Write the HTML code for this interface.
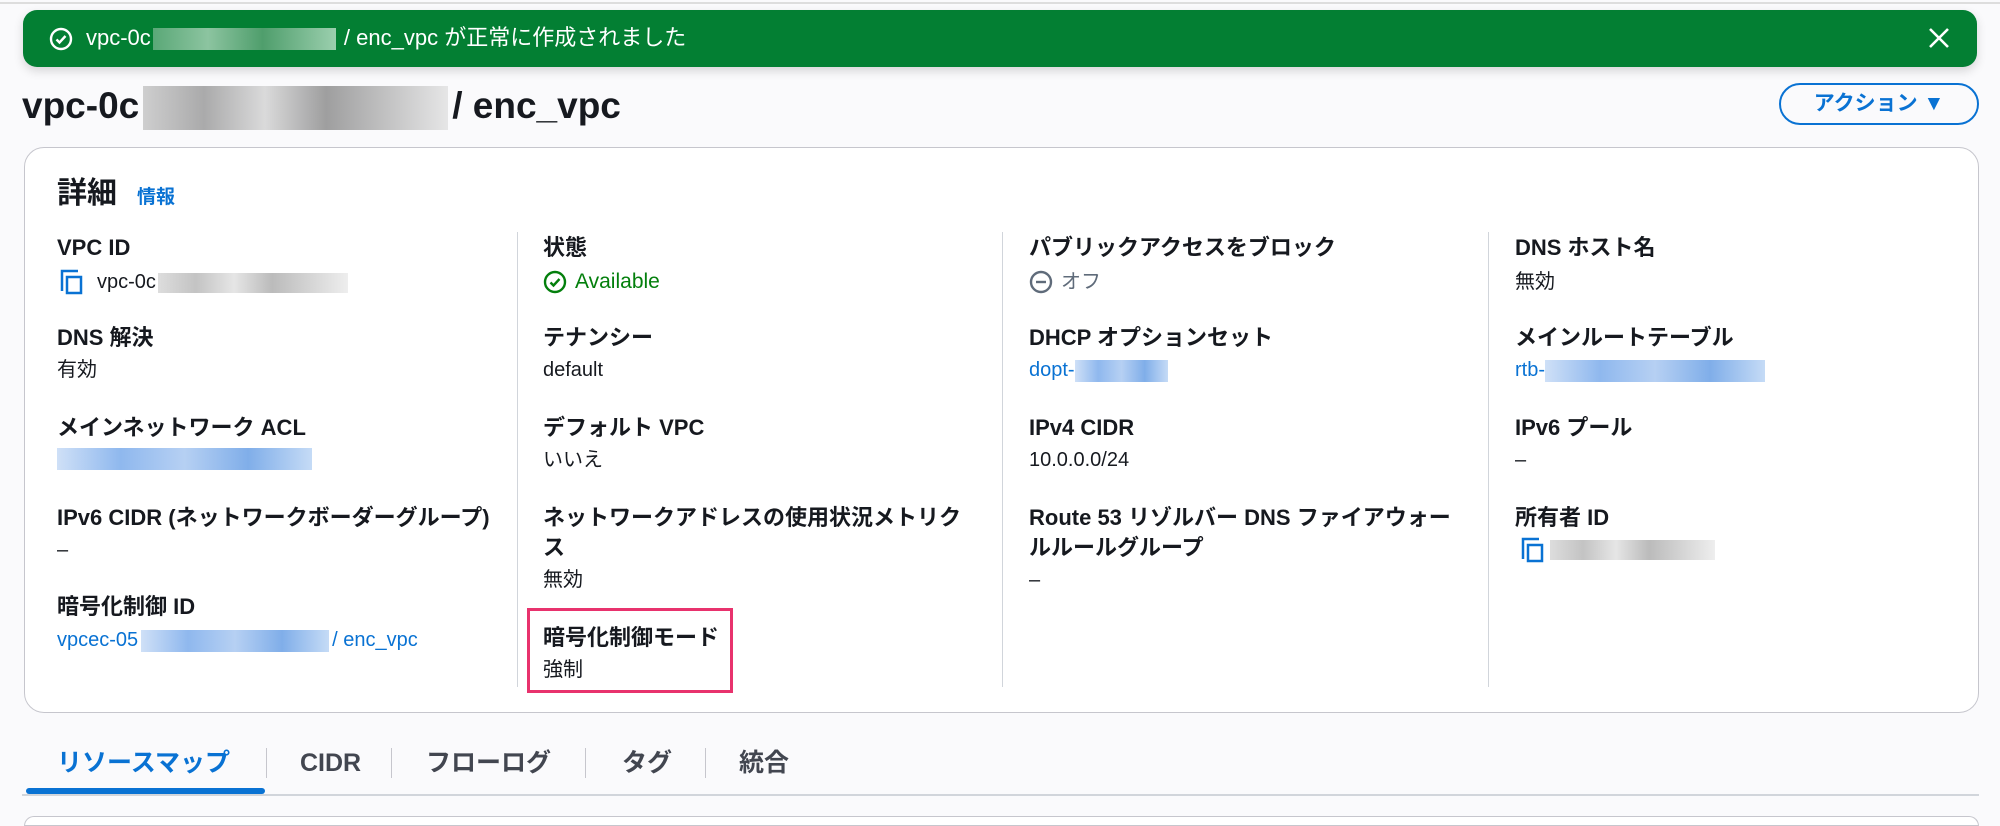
<!DOCTYPE html>
<html><head><meta charset="utf-8"><style>
*{margin:0;padding:0;box-sizing:border-box}
body{width:2000px;height:818px;background:#fafafc;font-family:"Liberation Sans","Noto Sans CJK JP",sans-serif;color:#16191f;position:relative;overflow:hidden}
.a{position:absolute;white-space:nowrap}
.l{font-size:22px;font-weight:bold;line-height:30px}
.v{font-size:20px;line-height:30px}
.lk{color:#0972d3}
.bg{background:linear-gradient(90deg,#bbb,#888 20%,#ccc 40%,#777 60%,#aaa 80%,#ddd);opacity:.7}
.bb{background:linear-gradient(90deg,#cfe0f7,#8fb8ee 25%,#b6d0f3 50%,#80aee9 75%,#c5dbf6);}
.dv{position:absolute;top:232px;height:455px;width:1px;background:#d1d5db}
.tb{position:absolute;top:748px;font-size:25px;font-weight:bold;line-height:30px;color:#424650}
</style></head><body>
<div class="a" style="left:0;top:2px;width:2000px;height:2px;background:#ddd"></div>
<div class="a" style="left:23px;top:10px;width:1954px;height:57px;background:#037f33;border-radius:14px;box-shadow:0 4px 10px rgba(0,0,0,.15)"></div>
<svg class="a" style="left:49px;top:27px" width="24" height="24" viewBox="0 0 24 24"><circle cx="12" cy="12" r="10" fill="none" stroke="#fff" stroke-width="2.4"/><path d="M7.5 12.5l3 3 6-6.5" fill="none" stroke="#fff" stroke-width="2.4"/></svg>
<div class="a" style="left:86px;top:23px;font-size:22px;line-height:30px;color:#fff">vpc-0c<span style="display:inline-block;width:183px;height:22px;vertical-align:middle;background:linear-gradient(90deg,#5aa877,#8cc4a0 30%,#4f9e6c 60%,#9bcfae);margin:0 2px"></span> / enc_vpc が正常に作成されました</div>
<svg class="a" style="left:1928px;top:27px" width="22" height="22" viewBox="0 0 22 22"><path d="M2 2L20 20M20 2L2 20" stroke="#fff" stroke-width="2.6"/></svg>

<div class="a" style="left:22px;top:82px;font-size:37px;font-weight:bold;line-height:48px">vpc-0c<span class="bg" style="display:inline-block;width:305px;height:44px;vertical-align:middle;margin:0 4px"></span>/ enc_vpc</div>
<div class="a" style="left:1779px;top:83px;width:200px;height:42px;border:2.5px solid #0972d3;border-radius:21px;color:#0972d3;font-size:21px;font-weight:bold;line-height:37px;text-align:center">アクション ▼</div>

<div class="a" style="left:24px;top:147px;width:1955px;height:566px;background:#fff;border:1.5px solid #c6c6cd;border-radius:20px"></div>
<div class="a" style="left:57px;top:176px;font-size:30px;font-weight:bold;line-height:36px">詳細<span style="font-size:19px;color:#0972d3;font-weight:bold;margin-left:20px">情報</span></div>
<div class="dv" style="left:517px"></div><div class="dv" style="left:1002px"></div><div class="dv" style="left:1488px"></div>

<div class="a l" style="left:57px;top:233px">VPC ID</div>
<svg class="a" style="left:60px;top:269px" width="24" height="26" viewBox="0 0 24 26"><path d="M2 22V2h16" fill="none" stroke="#0972d3" stroke-width="2.5"/><rect x="7" y="8" width="14" height="16" fill="none" stroke="#0972d3" stroke-width="2.5"/></svg>
<div class="a v" style="left:97px;top:267px">vpc-0c<span class="bg" style="display:inline-block;width:190px;height:20px;vertical-align:middle;margin-left:2px;opacity:.5"></span></div>
<div class="a l" style="left:57px;top:323px">DNS 解決</div>
<div class="a v" style="left:57px;top:355px">有効</div>
<div class="a l" style="left:57px;top:413px">メインネットワーク ACL</div>
<div class="a bb" style="left:57px;top:448px;width:255px;height:22px"></div>
<div class="a l" style="left:57px;top:503px">IPv6 CIDR (ネットワークボーダーグループ)</div>
<div class="a v" style="left:57px;top:535px">–</div>
<div class="a l" style="left:57px;top:592px">暗号化制御 ID</div>
<div class="a v lk" style="left:57px;top:625px">vpcec-05<span class="bb" style="display:inline-block;width:188px;height:22px;vertical-align:middle;margin:0 3px"></span>/ enc_vpc</div>

<div class="a l" style="left:543px;top:233px">状態</div>
<svg class="a" style="left:543px;top:270px" width="24" height="24" viewBox="0 0 24 24"><circle cx="12" cy="12" r="10" fill="none" stroke="#037f0c" stroke-width="2.4"/><path d="M7.5 12.5l3 3 6-6.5" fill="none" stroke="#037f0c" stroke-width="2.4"/></svg>
<div class="a v" style="left:575px;top:267px;color:#037f0c;font-size:21px">Available</div>
<div class="a l" style="left:543px;top:323px">テナンシー</div>
<div class="a v" style="left:543px;top:355px">default</div>
<div class="a l" style="left:543px;top:413px">デフォルト VPC</div>
<div class="a v" style="left:543px;top:445px">いいえ</div>
<div class="a l" style="left:543px;top:503px">ネットワークアドレスの使用状況メトリク</div>
<div class="a l" style="left:543px;top:533px">ス</div>
<div class="a v" style="left:543px;top:565px">無効</div>
<div class="a" style="left:527px;top:608px;width:206px;height:85px;border:3px solid #e8326d"></div>
<div class="a l" style="left:543px;top:623px">暗号化制御モード</div>
<div class="a v" style="left:543px;top:655px">強制</div>

<div class="a l" style="left:1029px;top:233px">パブリックアクセスをブロック</div>
<svg class="a" style="left:1029px;top:270px" width="24" height="24" viewBox="0 0 24 24"><circle cx="12" cy="12" r="10" fill="none" stroke="#5f6b7a" stroke-width="2.4"/><path d="M7 12h10" stroke="#5f6b7a" stroke-width="2.4"/></svg>
<div class="a v" style="left:1061px;top:267px;color:#5f6b7a">オフ</div>
<div class="a l" style="left:1029px;top:323px">DHCP オプションセット</div>
<div class="a v lk" style="left:1029px;top:355px">dopt-<span class="bb" style="display:inline-block;width:93px;height:22px;vertical-align:middle"></span></div>
<div class="a l" style="left:1029px;top:413px">IPv4 CIDR</div>
<div class="a v" style="left:1029px;top:445px">10.0.0.0/24</div>
<div class="a l" style="left:1029px;top:503px">Route 53 リゾルバー DNS ファイアウォー</div>
<div class="a l" style="left:1029px;top:533px">ルルールグループ</div>
<div class="a v" style="left:1029px;top:565px">–</div>

<div class="a l" style="left:1515px;top:233px">DNS ホスト名</div>
<div class="a v" style="left:1515px;top:267px">無効</div>
<div class="a l" style="left:1515px;top:323px">メインルートテーブル</div>
<div class="a v lk" style="left:1515px;top:355px">rtb-<span class="bb" style="display:inline-block;width:220px;height:22px;vertical-align:middle"></span></div>
<div class="a l" style="left:1515px;top:413px">IPv6 プール</div>
<div class="a v" style="left:1515px;top:445px">–</div>
<div class="a l" style="left:1515px;top:503px">所有者 ID</div>
<svg class="a" style="left:1521px;top:537px" width="24" height="26" viewBox="0 0 24 26"><path d="M2 22V2h16" fill="none" stroke="#0972d3" stroke-width="2.5"/><rect x="7" y="8" width="14" height="16" fill="none" stroke="#0972d3" stroke-width="2.5"/></svg>
<div class="a bg" style="left:1550px;top:540px;width:165px;height:20px;opacity:.5"></div>

<div class="tb" style="left:57px;color:#0972d3">リソースマップ</div>
<div class="a" style="left:266px;top:748px;width:1px;height:30px;background:#c6c6cd"></div>
<div class="tb" style="left:300px">CIDR</div>
<div class="a" style="left:391px;top:748px;width:1px;height:30px;background:#c6c6cd"></div>
<div class="tb" style="left:426px">フローログ</div>
<div class="a" style="left:585px;top:748px;width:1px;height:30px;background:#c6c6cd"></div>
<div class="tb" style="left:622px">タグ</div>
<div class="a" style="left:705px;top:748px;width:1px;height:30px;background:#c6c6cd"></div>
<div class="tb" style="left:739px">統合</div>
<div class="a" style="left:22px;top:794px;width:1957px;height:2px;background:#d1d5db"></div>
<div class="a" style="left:26px;top:788px;width:239px;height:6px;background:#0972d3;border-radius:3px"></div>
<div class="a" style="left:24px;top:816px;width:1955px;height:10px;background:#fff;border:1.5px solid #c6c6cd;border-radius:20px 20px 0 0"></div>
</body></html>
